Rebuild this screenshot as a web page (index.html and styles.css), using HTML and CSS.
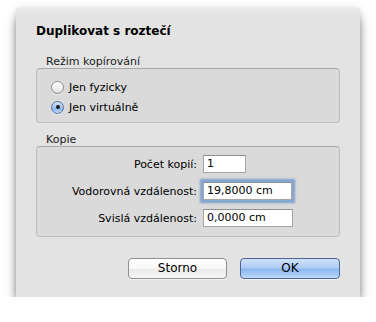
FILE: index.html
```html
<!DOCTYPE html>
<html lang="cs">
<head>
<meta charset="utf-8">
<title>Duplikovat s roztečí</title>
<link rel="stylesheet" href="styles.css">
</head>
<body>
<div class="sheet">
  <h1 class="title">Duplikovat s roztečí</h1>

  <section class="group">
    <div class="group-label">Režim kopírování</div>
    <div class="group-box radios">
      <div class="radio"><span class="radio-btn"></span><span>Jen fyzicky</span></div>
      <div class="radio"><span class="radio-btn checked"></span><span>Jen virtuálně</span></div>
    </div>
  </section>

  <section class="group group-second">
    <div class="group-label">Kopie</div>
    <div class="group-box fields">
      <span class="field-label">Počet kopií:</span>
      <span class="input input-short">1</span>
      <span class="field-label">Vodorovná vzdálenost:</span>
      <span class="input input-focus">19,8000 cm</span>
      <span class="field-label">Svislá vzdálenost:</span>
      <span class="input">0,0000 cm</span>
    </div>
  </section>

  <div class="buttons">
    <div class="button">Storno</div>
    <div class="button button-default">OK</div>
  </div>
</div>
</body>
</html>
```

FILE: styles.css
```css
html, body {
  margin: 0;
  padding: 0;
  background: #ffffff;
}

body {
  font-family: "DejaVu Sans", sans-serif;
  font-size: 11px;
  color: #000;
}

.sheet {
  box-sizing: border-box;
  width: 344px;
  height: 289px;
  margin: 8px 0 0 16px;
  padding: 16px 20px 0 20px;
  background: linear-gradient(#eaeaea, #e3e3e3 6px, #e3e3e3);
  box-shadow: 0 8px 11px -2px rgba(0, 0, 0, 0.62), 0 0 6px rgba(0, 0, 0, 0.12);
}

.title {
  margin: 0;
  font-size: 12px;
  line-height: 15px;
  font-weight: bold;
  color: #000;
}

.group {
  margin-top: 16px;
}

.group-second {
  margin-top: 10px;
}

.group-label {
  line-height: 13px;
  padding-left: 10px;
  color: #1a1a1a;
}

.group-box {
  border: 1px solid #bebebe;
  border-top-color: #a9a9a9;
  border-radius: 4px;
  background: #dadada;
}

.radios {
  padding: 8px 0 5px 14px;
}

.radio {
  display: flex;
  align-items: center;
  gap: 5px;
  height: 20px;
}

.radio-btn {
  box-sizing: border-box;
  width: 13px;
  height: 13px;
  border-radius: 50%;
  border: 1px solid #8c8c8c;
  background: linear-gradient(#ffffff, #f2f2f2 50%, #dedede);
  box-shadow: 0 1px 0 rgba(255, 255, 255, 0.5);
  display: flex;
  align-items: center;
  justify-content: center;
}

.radio-btn.checked {
  border-color: #5a6f9e;
  background: linear-gradient(#d3e3f8, #9fc2ee 50%, #86b2ec 55%, #bcd8fa);
}

.radio-btn.checked::after {
  content: "";
  width: 4px;
  height: 4px;
  border-radius: 50%;
  background: #1c1c1c;
}

.fields {
  display: grid;
  grid-template-columns: 160px auto;
  column-gap: 6px;
  row-gap: 9px;
  align-items: center;
  justify-items: start;
  padding: 8px 0 9px 0;
}

.field-label {
  justify-self: end;
  color: #000;
}

.input {
  box-sizing: border-box;
  display: block;
  width: 90px;
  height: 18px;
  line-height: 16px;
  padding-left: 3px;
  background: #fff;
  border: 1px solid #a5a5a5;
  border-top-color: #8e8e8e;
}

.input-short {
  width: 43px;
}

.input-focus {
  width: 89px;
  box-shadow: 0 0 0 1px #88a9d6, 0 0 2px 3px rgba(94, 140, 205, 0.75);
}

.buttons {
  display: flex;
  justify-content: flex-end;
  gap: 13px;
  margin-top: 21px;
}

.button {
  box-sizing: border-box;
  width: 99px;
  height: 21px;
  line-height: 19px;
  text-align: center;
  font-size: 12px;
  border: 1px solid #8f8f8f;
  border-radius: 4px;
  background: linear-gradient(#ffffff, #f7f7f7 50%, #ebebeb 55%, #f6f6f6);
  box-shadow: 0 1px 0 rgba(255, 255, 255, 0.6);
}

.button-default {
  width: 100px;
  border-color: #4e649c;
  background: linear-gradient(#d0e2f9, #aecdf5 45%, #8fb8f0 55%, #a9cdf8 85%, #c4e0fc);
}
```
